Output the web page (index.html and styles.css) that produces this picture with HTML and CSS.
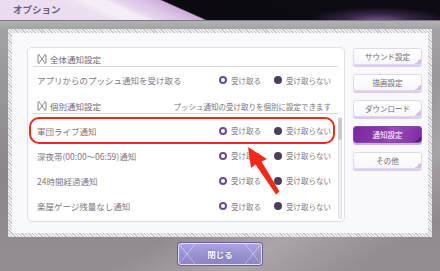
FILE: index.html
```html
<!DOCTYPE html>
<html lang="ja">
<head>
<meta charset="utf-8">
<title>オプション</title>
<link rel="stylesheet" href="styles.css">
</head>
<body>
<div class="screen">
  <header class="topbar"><h1 class="title">オプション</h1></header>
  <main class="stage">
    <section class="panel">
      <div class="panel-inner">
        <div class="card">
          <div class="sechead sechead-first">
            <svg class="icon" viewBox="0 0 10 10"><path d="M3 1H1V9H3M7 1H9V9H7M2.5 1.5L7.5 8.5M7.5 1.5L2.5 8.5" fill="none" stroke="#8a8690" stroke-width="1"/></svg>
            <span class="sectitle">全体通知設定</span>
          </div>
          <div class="row row-main">
            <span class="label">アプリからのプッシュ通知を受け取る</span>
            <div class="radios"><span class="opt"><i class="dot dot-on"></i>受け取る</span><span class="opt"><i class="dot dot-off"></i>受け取らない</span></div>
          </div>
          <div class="sechead sechead-second">
            <svg class="icon" viewBox="0 0 10 10"><path d="M3 1H1V9H3M7 1H9V9H7M2.5 1.5L7.5 8.5M7.5 1.5L2.5 8.5" fill="none" stroke="#8a8690" stroke-width="1"/></svg>
            <span class="sectitle">個別通知設定</span>
            <span class="hint">プッシュ通知の受け取りを個別に設定できます</span>
          </div>
          <div class="list">
            <div class="rows">
              <div class="row"><span class="label">軍団ライブ通知</span><div class="radios"><span class="opt"><i class="dot dot-on"></i>受け取る</span><span class="opt"><i class="dot dot-off"></i>受け取らない</span></div></div>
              <div class="row"><span class="label">深夜帯(00:00～06:59)通知</span><div class="radios"><span class="opt"><i class="dot dot-on"></i>受け取る</span><span class="opt"><i class="dot dot-off"></i>受け取らない</span></div></div>
              <div class="row"><span class="label">24時間経過通知</span><div class="radios"><span class="opt"><i class="dot dot-on"></i>受け取る</span><span class="opt"><i class="dot dot-off"></i>受け取らない</span></div></div>
              <div class="row"><span class="label">楽屋ゲージ残量なし通知</span><div class="radios"><span class="opt"><i class="dot dot-on"></i>受け取る</span><span class="opt"><i class="dot dot-off"></i>受け取らない</span></div></div>
            </div>
            <div class="scrollbar"><div class="thumb"></div></div>
          </div>
        </div>
        <nav class="menu">
          <div class="btn">サウンド設定</div>
          <div class="btn">描画設定</div>
          <div class="btn">ダウンロード</div>
          <div class="btn btn-active">通知設定</div>
          <div class="btn">その他</div>
        </nav>
      </div>
    </section>
    <button class="close">閉じる</button>
  </main>
  <div class="highlight"></div>
  <svg class="arrow" viewBox="0 0 440 271"><polygon points="248,147 267,159 261.5,161.5 279.5,191.5 276,194.5 255.5,164.5 251,168" fill="#f02a1a"/></svg>
</div>
</body>
</html>
```
FILE: styles.css
```css
body {
  margin: 0;
  width: 440px;
  height: 271px;
  overflow: hidden;
  font-family: "Noto Sans CJK JP", "Noto Sans", sans-serif;
}
.screen {
  position: relative;
  width: 440px;
  height: 271px;
  overflow: hidden;
}
.topbar {
  height: 20px;
  box-sizing: border-box;
  display: flex;
  align-items: center;
  padding-left: 13px;
  background:
    radial-gradient(ellipse 70px 14px at 378px 21px, rgba(150,110,180,.8), rgba(100,70,130,.45) 50%, rgba(20,10,30,0) 100%),
    linear-gradient(24deg, #e9dbee 0, #ecdff0 44px, #f4eef6 52px, #f4eef6 60px, #e6d4ec 65px, #dcc4e6 74px, #cdaedb 83px, #0c0a10 84.5px, #0e0b14 100%);
}
.title {
  margin: 0;
  font-size: 9.5px;
  font-weight: 700;
  color: #6b5a80;
  line-height: 1;
}
.stage {
  height: 251px;
  box-sizing: border-box;
  border-top: 1px solid #7b7a7e;
  padding: 8px 8px 0;
  display: flex;
  flex-direction: column;
  align-items: center;
  background:
    linear-gradient(150deg, rgba(255,255,255,0) 62%, rgba(255,255,255,.22) 76%, rgba(255,255,255,0) 90%),
    linear-gradient(to bottom, #b2b2b5 0, #a3a1a5 8px, #8c868c 60%, #948d92 100%);
}
.panel {
  align-self: stretch;
  padding: 4px;
  background: repeating-linear-gradient(45deg, #c6c6c8 0 1px, #f1f1f2 1px 2.4px);
}
.panel-inner {
  height: 200px;
  box-sizing: border-box;
  background: #f9f8fb;
  padding: 14px 6px 11px 15px;
  display: flex;
  gap: 8px;
}
.card {
  width: 318px;
  box-sizing: border-box;
  border: 1px solid #e2dee8;
  border-radius: 5px;
  background: #fff;
  padding: 0 2px 0 5px;
  display: flex;
  flex-direction: column;
}
.sechead {
  height: 14px;
  padding: 4px 7px 0 4px;
  margin-right: 4px;
  border-bottom: 1px solid #dcd8e2;
  display: flex;
  align-items: center;
}
.sechead-second {
  padding-top: 6px;
}
.icon {
  width: 10px;
  height: 10px;
  margin-right: 3px;
  flex: none;
}
.sectitle {
  font-size: 8.5px;
  color: #6e6a74;
}
.hint {
  margin-left: auto;
  font-size: 7.5px;
  color: #76727c;
}
.row {
  display: flex;
  align-items: center;
  justify-content: space-between;
  padding: 0 7px 0 4px;
}
.row-main {
  height: 26px;
  padding-right: 11px;
}
.label {
  font-size: 8.5px;
  color: #7c7882;
}
.radios {
  display: flex;
  gap: 13px;
}
.opt {
  display: flex;
  align-items: center;
  gap: 4px;
  font-size: 7.5px;
  color: #7c7882;
}
.dot {
  display: block;
  width: 8px;
  height: 8px;
  border-radius: 50%;
  box-sizing: border-box;
}
.dot-on {
  border: 2px solid #6d4c8e;
  background: #fff;
}
.dot-off {
  background: #4d3d5d;
}
.list {
  flex: 1;
  display: flex;
}
.rows {
  flex: 1;
  padding-top: 4px;
}
.rows .row {
  height: 25.2px;
}
.scrollbar {
  width: 4px;
  margin: 3px 0 2px;
  background: #f1f0f3;
  border-radius: 2px;
  box-shadow: inset 0 0 0 1px #e3e1e7;
}
.thumb {
  height: 22px;
  margin-top: 1px;
  border-radius: 2px;
  background: #cac8ce;
}
.menu {
  width: 69px;
  display: flex;
  flex-direction: column;
  gap: 9px;
  padding-top: 1px;
}
.btn {
  height: 17px;
  box-sizing: border-box;
  border: 1px solid #e2d8ec;
  border-radius: 3px;
  background:
    linear-gradient(to top left, #d3bee4 50%, rgba(0,0,0,0) 50%) right bottom / 6px 6px no-repeat,
    linear-gradient(#ffffff, #f8f6fa);
  box-shadow: 0 2px 0 #dccbea;
  font-size: 7.5px;
  color: #6e6a74;
  display: flex;
  align-items: center;
  justify-content: center;
}
.btn-active {
  border-color: #8c44b2;
  color: #fff;
  background:
    linear-gradient(to top left, #5e1b7c 50%, rgba(0,0,0,0) 50%) right bottom / 6px 6px no-repeat,
    linear-gradient(110deg, #7a2a9e 0, #8c3aae 45%, #9a4cbc 55%, #7c2ca0 100%);
  box-shadow: 0 2px 0 #c9b2de;
}
.close {
  margin-top: 6px;
  width: 84px;
  height: 22px;
  padding: 0;
  border: 1px solid #e6e2f4;
  border-radius: 3px;
  box-shadow: 0 0 0 1px #675e92;
  background:
    linear-gradient(to bottom right, rgba(255,255,255,0) calc(50% - .6px), rgba(255,255,255,.5) 50%, rgba(255,255,255,0) calc(50% + .6px)) left top / 16px 100% no-repeat,
    linear-gradient(to top right, rgba(255,255,255,0) calc(50% - .6px), rgba(255,255,255,.5) 50%, rgba(255,255,255,0) calc(50% + .6px)) left top / 16px 100% no-repeat,
    linear-gradient(to bottom right, rgba(255,255,255,0) calc(50% - .6px), rgba(255,255,255,.5) 50%, rgba(255,255,255,0) calc(50% + .6px)) right top / 16px 100% no-repeat,
    linear-gradient(to top right, rgba(255,255,255,0) calc(50% - .6px), rgba(255,255,255,.5) 50%, rgba(255,255,255,0) calc(50% + .6px)) right top / 16px 100% no-repeat,
    linear-gradient(#aba3dd, #8c83c7);
  color: #fff;
  font-family: inherit;
  font-size: 8.5px;
  font-weight: 700;
  text-shadow: 0 0 2px #5a4f90;
}
.highlight {
  position: absolute;
  left: 29px;
  top: 117px;
  width: 306px;
  height: 27px;
  box-sizing: border-box;
  border: 2.5px solid #f0281a;
  border-radius: 10px;
}
.arrow {
  position: absolute;
  left: 0;
  top: 0;
  width: 440px;
  height: 271px;
  pointer-events: none;
}
```
